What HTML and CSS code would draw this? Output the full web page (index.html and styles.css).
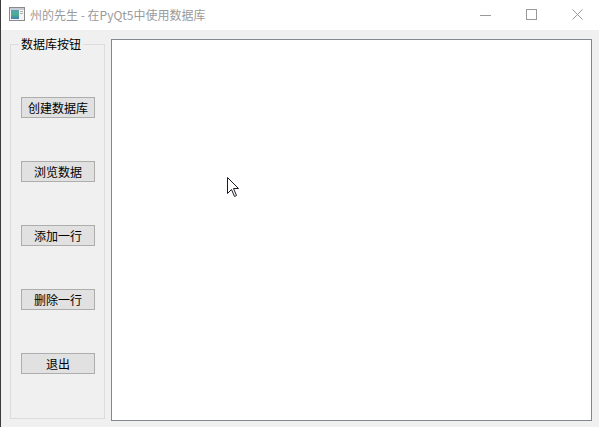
FILE: index.html
```html
<!DOCTYPE html>
<html lang="zh">
<head>
<meta charset="utf-8">
<title>州的先生 - 在PyQt5中使用数据库</title>
<link rel="stylesheet" href="styles.css">
</head>
<body>
<div class="window">
  <div class="titlebar">
    <svg class="app-icon" width="16" height="14" viewBox="0 0 16 14">
      <defs>
        <linearGradient id="g" x1="0" y1="0" x2="0" y2="1">
          <stop offset="0" stop-color="#5aa0b8"/>
          <stop offset="0.5" stop-color="#4fae8a"/>
          <stop offset="1" stop-color="#3f7fb5"/>
        </linearGradient>
      </defs>
      <rect x="0.5" y="0.5" width="15" height="13" fill="#f4f4f4" stroke="#8a8a8a"/>
      <rect x="1" y="1" width="14" height="2" fill="#c8cdd3"/>
      <rect x="2" y="3" width="8" height="9" fill="url(#g)"/>
      <rect x="11" y="4" width="3" height="1" fill="#b0b0b0"/>
      <rect x="11" y="6" width="3" height="1" fill="#b0b0b0"/>
    </svg>
    <span class="title">州的先生 - 在PyQt5中使用数据库</span>
    <div class="controls">
      <span class="ctl">
        <svg width="12" height="12" viewBox="0 0 12 12"><path d="M0 6.5H11" stroke="#999" stroke-width="1"/></svg>
      </span>
      <span class="ctl">
        <svg width="12" height="12" viewBox="0 0 12 12"><rect x="0.5" y="0.5" width="10" height="10" fill="none" stroke="#999"/></svg>
      </span>
      <span class="ctl">
        <svg width="12" height="12" viewBox="0 0 12 12"><path d="M0.5 0.5L10.5 10.5M10.5 0.5L0.5 10.5" stroke="#999" stroke-width="1"/></svg>
      </span>
    </div>
  </div>
  <div class="content">
    <div class="group">
      <div class="group-title">数据库按钮</div>
      <div class="buttons">
        <div class="btn">创建数据库</div>
        <div class="btn">浏览数据</div>
        <div class="btn">添加一行</div>
        <div class="btn">删除一行</div>
        <div class="btn">退出</div>
      </div>
    </div>
    <div class="table-view"></div>
  </div>
  <svg class="cursor" width="13" height="21" viewBox="0 0 13 21">
    <path d="M0.5 0.5V16.5L4.5 12.5L7.5 19.5L9.5 18.5L6.5 11.5H11.5Z" fill="#fff" stroke="#1a1a2a" stroke-width="1" stroke-linejoin="miter"/>
  </svg>
</div>
</body>
</html>
```
FILE: styles.css
```css
html, body {
  margin: 0;
  padding: 0;
  background: #f0f0f0;
}

body {
  font-family: "Noto Sans CJK SC", "Noto Sans", sans-serif;
  font-size: 12px;
  color: #000;
}

.window {
  position: relative;
  width: 599px;
  height: 427px;
  box-sizing: border-box;
  border-left: 1px solid #3a3a3a;
  display: flex;
  flex-direction: column;
  overflow: hidden;
  background: #f0f0f0;
}

.titlebar {
  height: 30px;
  flex: none;
  background: #fff;
  display: flex;
  align-items: center;
  padding-left: 8px;
}

.app-icon {
  flex: none;
  margin-top: -2px;
}

.title {
  margin-left: 5px;
  color: #9a9a9a;
  font-size: 12px;
  line-height: 14px;
  margin-top: -1px;
  white-space: nowrap;
}

.controls {
  margin-left: auto;
  margin-right: -2px;
  display: flex;
  height: 30px;
}

.ctl {
  width: 46px;
  height: 30px;
  display: flex;
  align-items: center;
  justify-content: center;
}

.content {
  flex: 1;
  display: flex;
  align-items: flex-start;
  padding: 9px 7px 6px 9px;
  gap: 6px;
}

.group {
  width: 95px;
  height: 375px;
  box-sizing: border-box;
  margin-top: 5px;
  border: 1px solid #dcdcdc;
  padding: 0 0 0 10px;
  flex: none;
}

.group-title {
  display: block;
  width: fit-content;
  margin-top: -8px;
  margin-left: -2px;
  padding: 0 2px;
  background: #f0f0f0;
  line-height: 14px;
  font-size: 12px;
  color: #000;
  white-space: nowrap;
}

.buttons {
  margin-top: 46px;
  display: flex;
  flex-direction: column;
  gap: 43px;
}

.btn {
  width: 74px;
  height: 21px;
  box-sizing: border-box;
  background: #e1e1e1;
  border: 1px solid #adadad;
  display: flex;
  align-items: center;
  justify-content: center;
  font-size: 12px;
  line-height: 14px;
  color: #000;
  white-space: nowrap;
}

.table-view {
  width: 481px;
  height: 382px;
  box-sizing: border-box;
  border: 1px solid #828790;
  background: #fff;
  flex: none;
}

.cursor {
  position: absolute;
  left: 226px;
  top: 177px;
}
```
